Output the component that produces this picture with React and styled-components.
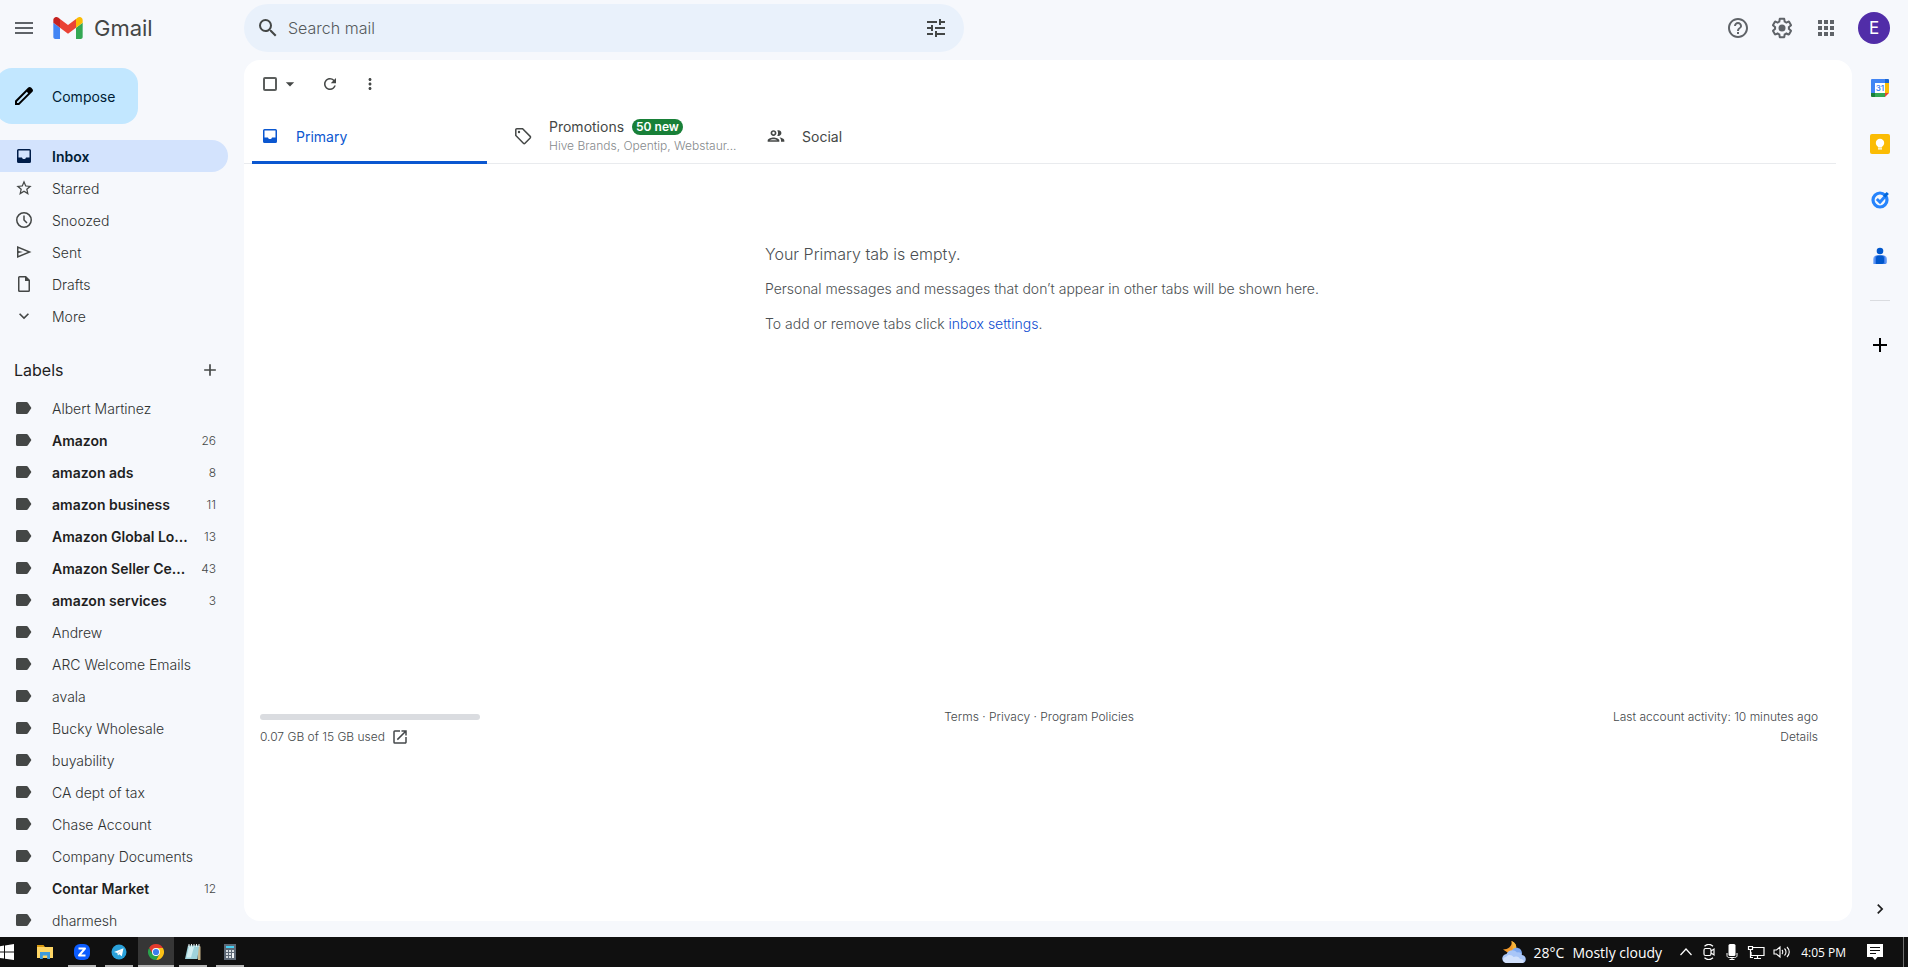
import styled, { createGlobalStyle } from "styled-components";
import {
  MdMenu,
  MdSearch,
  MdTune,
  MdHelpOutline,
  MdApps,
  MdRefresh,
  MdMoreVert,
  MdArrowDropDown,
  MdExpandMore,
  MdAdd,
  MdOpenInNew,
  MdChevronRight,
  MdOutlineGroup,
} from "react-icons/md";

const GlobalStyle = createGlobalStyle`
  * {
    box-sizing: border-box;
  }
  body {
    margin: 0;
    background: #f6f8fc;
    color: #444746;
    font-family: Inter, Roboto, "Liberation Sans", sans-serif;
    font-size: 14px;
  }
  button, input {
    font: inherit;
    color: inherit;
  }
  button {
    padding: 0;
    border: 0;
    background: none;
    cursor: pointer;
  }
  a {
    color: inherit;
    text-decoration: none;
  }
  svg {
    display: block;
    flex: none;
  }
`;

const Page = styled.div`
  display: flex;
  flex-direction: column;
  min-height: 100vh;
`;
const Body = styled.div`
  flex: 1;
  display: flex;
`;
const Header = styled.header`
  display: flex;
  align-items: center;
  height: 56px;
  margin-bottom: 4px;
  padding-right: 18px;
`;
const Brand = styled.div`
  display: flex;
  align-items: center;
  width: 244px;
  padding-left: 12px;
`;
const IconButton = styled.button`
  display: flex;
  align-items: center;
  justify-content: center;
  width: ${({ $width }) => $width || 24}px;
  height: 24px;
  color: ${({ $color }) => $color || "#444746"};
`;
const Logo = styled.a`
  display: flex;
  align-items: center;
  gap: 11px;
  margin-left: 17px;
  color: #444746;
  font-size: 22px;
  line-height: 28px;
`;
const SearchBar = styled.form`
  display: flex;
  align-items: center;
  gap: 8px;
  flex: 0 1 720px;
  height: 48px;
  padding: 0 16px 0 12px;
  border-radius: 24px;
  background: #e9f1fb;
`;
const SearchInput = styled.input`
  flex: 1;
  min-width: 0;
  padding: 0;
  border: 0;
  outline: 0;
  background: transparent;
  font-size: 16px;
  font-weight: 300;
  &::placeholder {
    color: #55595b;
    opacity: 1;
  }
`;
const HeaderTools = styled.div`
  display: flex;
  align-items: center;
  gap: 20px;
  margin-left: auto;
`;
const Avatar = styled.button`
  width: 32px;
  height: 32px;
  border-radius: 50%;
  background: #512da8;
  color: white;
  font-size: 17px;
  line-height: 32px;
`;

const Sidebar = styled.aside`
  width: 244px;
  flex: none;
  padding: 8px 16px 0 0;
`;
const Compose = styled.button`
  display: flex;
  align-items: center;
  gap: 16px;
  width: 142px;
  height: 56px;
  margin: 0 0 16px -4px;
  padding-left: 16px;
  border-radius: 16px;
  background: #c2e7ff;
  color: #001d35;
`;
const NavItem = styled.a`
  display: flex;
  align-items: center;
  height: 32px;
  padding: 0 12px 0 14px;
  border-radius: 0 16px 16px 0;
  background: ${({ $active }) => ($active ? "#d3e3fd" : "transparent")};
  color: ${({ $active, $bold }) => ($active ? "#001d35" : $bold ? "#1f1f1f" : "#2f3231")};
  font-weight: ${({ $active, $bold }) => ($active || $bold ? 600 : 300)};
  svg {
    margin-right: 18px;
    color: ${({ $active }) => ($active ? "#001d49" : "#444746")};
  }
`;
const Count = styled.span`
  margin-left: auto;
  color: #444746;
  font-size: 12px;
  font-weight: 300;
`;
const LabelsHeading = styled.div`
  display: flex;
  align-items: center;
  justify-content: space-between;
  height: 32px;
  margin: 22px 0 6px;
  padding: 0 6px 0 14px;
  h2 {
    margin: 0;
    color: #1f1f1f;
    font-size: 16px;
    font-weight: 400;
  }
`;

const Card = styled.main`
  flex: 1;
  min-width: 0;
  margin-bottom: 16px;
  padding-right: 16px;
  border-radius: 16px;
  background: white;
`;
const Toolbar = styled.div`
  display: flex;
  align-items: center;
  height: 48px;
  padding-left: 19px;
`;
const CheckBox = styled.input`
  appearance: none;
  width: 14px;
  height: 14px;
  margin: 0 1px 0 0;
  border: 2px solid #5b5e5d;
  border-radius: 2px;
`;
const Tabs = styled.div`
  display: flex;
  height: 56px;
  border-bottom: 1px solid #e9ebee;
`;
const Tab = styled.button`
  display: flex;
  align-items: center;
  gap: 16px;
  width: 235px;
  height: 56px;
  margin: 0 10px 0 8px;
  padding-left: 8px;
  border-bottom: 3px solid ${({ $active }) => ($active ? "#0b57d0" : "transparent")};
  border-top: 3px solid transparent;
  border-radius: 2px 2px 0 0;
  color: ${({ $active }) => ($active ? "#0b57d0" : "#444746")};
  text-align: left;
  white-space: nowrap;
`;
const TabTitle = styled.span`
  display: flex;
  align-items: center;
  gap: 8px;
  line-height: 20px;
`;
const Badge = styled.span`
  padding: 0 4px;
  border-radius: 8px;
  background: #188038;
  color: white;
  font-size: 12px;
  font-weight: 600;
  line-height: 16px;
`;
const TabSenders = styled.span`
  display: block;
  color: #85898c;
  font-size: 12px;
  font-weight: 300;
  line-height: 18px;
`;
const Empty = styled.section`
  width: 550px;
  margin: 80px auto 0;
  color: #4b4f52;
  font-weight: 300;
  white-space: nowrap;
  p {
    margin: 0 0 15px;
    line-height: 20px;
  }
  p:first-child {
    font-size: 16px;
  }
  a {
    color: #0b4bd0;
  }
`;
const Footer = styled.footer`
  display: grid;
  grid-template-columns: 1fr auto 1fr;
  margin-top: 373px;
  padding: 0 18px 0 16px;
  color: #44484b;
  font-size: 12px;
  font-weight: 300;
  line-height: 20px;
`;
const StorageBar = styled.div`
  width: 220px;
  height: 6px;
  margin: 7px 0;
  border-radius: 3px;
  background: #dadce0;
`;
const Storage = styled.a`
  display: flex;
  align-items: center;
  gap: 6px;
`;
const Activity = styled.div`
  text-align: right;
  a {
    display: block;
  }
`;

const SidePanel = styled.aside`
  display: flex;
  flex-direction: column;
  align-items: center;
  gap: 32px;
  width: 56px;
  padding: 16px 0;
`;
const Divider = styled.hr`
  width: 20px;
  margin: 0;
  border: 0;
  border-top: 1px solid #dadce0;
`;
const PanelToggle = styled(IconButton)`
  margin-top: auto;
`;

const Taskbar = styled.footer`
  display: flex;
  align-items: center;
  justify-content: space-between;
  height: 30px;
  background: #101010;
  color: white;
  font-family: "Open Sans", "Noto Sans", sans-serif;
`;
const TaskApps = styled.div`
  display: flex;
  gap: 1px;
`;
const TaskButton = styled.button`
  display: flex;
  align-items: center;
  justify-content: center;
  width: 36px;
  height: 30px;
  background: ${({ $active }) => ($active ? "#363636" : "transparent")};
  border-top: 2px solid transparent;
  border-bottom: 2px solid transparent;
  border-image: ${({ $open, $active }) =>
    $active
      ? "linear-gradient(#b5b5b5, #b5b5b5) 0 0 2 0"
      : $open
        ? "linear-gradient(90deg, transparent 4px, #b5b5b5 4px, #b5b5b5 32px, transparent 32px) 0 0 2 0"
        : "none"};
`;
const StartButton = styled(TaskButton)`
  width: 26px;
  justify-content: flex-start;
`;
const Tray = styled.div`
  display: flex;
  align-items: center;
  height: 30px;
  padding-right: 4px;
`;
const Weather = styled.button`
  display: flex;
  align-items: center;
  gap: 8px;
  margin-right: 17px;
  font-size: 14px;
`;
const TrayIcons = styled.div`
  display: flex;
  align-items: center;
  gap: 8px;
`;
const Clock = styled.time`
  margin: 0 21px 0 10px;
  font-size: 12px;
`;
const ShowDesktop = styled.div`
  width: 1px;
  height: 30px;
  margin-left: 20px;
  background: #6e6e6e;
`;

const GmailLogo = () => (
  <svg width="30" height="22" viewBox="52 42 88 66">
    <path fill="#4285f4" d="M58 108h14V74L52 59v43c0 3.32 2.69 6 6 6" />
    <path fill="#34a853" d="M120 108h14c3.32 0 6-2.69 6-6V59l-20 15" />
    <path fill="#fbbc04" d="M120 48v26l20-15v-8c0-7.42-8.47-11.65-14.4-7.2" />
    <path fill="#ea4335" d="M72 74V48l24 18 24-18v26L96 92" />
    <path fill="#c5221f" d="M52 51v8l20 15V48l-5.6-4.2c-5.94-4.45-14.4-.22-14.4 7.2" />
  </svg>
);

const PencilIcon = () => (
  <svg width="24" height="24" viewBox="0 0 24 24" fill="#000">
    <path d="M20.41 4.94l-1.35-1.35c-.78-.78-2.05-.78-2.83 0L3 16.82V21h4.18L20.41 7.77c.79-.78.79-2.05 0-2.83zm-14 14.12L5 19v-1.36l9.82-9.82 1.41 1.41-9.82 9.83z" />
  </svg>
);

const GearIcon = () => (
  <svg width="24" height="24" viewBox="0 0 24 24" fill="currentColor">
    <path d="M13.85 22.25h-3.7c-.74 0-1.36-.54-1.45-1.27l-.27-1.89c-.27-.14-.53-.29-.79-.46l-1.8.72c-.7.26-1.47-.03-1.81-.65L2.2 15.53c-.35-.66-.2-1.44.36-1.88l1.53-1.19c-.01-.15-.02-.3-.02-.46 0-.15.01-.31.02-.46l-1.52-1.19c-.59-.45-.74-1.26-.37-1.88l1.85-3.19c.34-.62 1.11-.9 1.79-.63l1.81.73c.26-.17.52-.32.78-.46l.27-1.91c.09-.7.71-1.25 1.44-1.25h3.7c.74 0 1.36.54 1.45 1.27l.27 1.89c.27.14.53.29.79.46l1.8-.72c.71-.26 1.48.03 1.82.65l1.84 3.18c.36.66.2 1.44-.36 1.88l-1.52 1.19c.01.15.02.3.02.46s-.01.31-.02.46l1.52 1.19c.56.45.72 1.23.37 1.86l-1.86 3.22c-.34.62-1.11.9-1.8.63l-1.8-.72c-.26.17-.52.32-.78.46l-.27 1.91c-.1.68-.72 1.22-1.46 1.22zm-3.23-2h2.76l.37-2.55.53-.22c.44-.18.88-.44 1.34-.78l.45-.34 2.38.96 1.38-2.4-2.03-1.58.07-.56c.03-.26.06-.51.06-.78s-.03-.53-.06-.78l-.07-.56 2.03-1.58-1.39-2.4-2.39.96-.45-.35c-.42-.32-.87-.58-1.33-.77l-.52-.22-.37-2.55h-2.76l-.37 2.55-.53.21c-.44.19-.88.44-1.34.79l-.45.33-2.38-.95-1.39 2.39 2.03 1.58-.07.56a7 7 0 0 0-.06.79c0 .26.02.53.06.78l.07.56-2.03 1.58 1.38 2.4 2.39-.96.45.35c.43.33.86.58 1.33.77l.53.22.38 2.55z" />
    <circle cx="12" cy="12" r="3.5" />
  </svg>
);

const InboxIcon = () => (
  <svg width="20" height="20" viewBox="0 0 20 20" fill="currentColor">
    <path
      fillRule="evenodd"
      d="M4.5 3h11A1.5 1.5 0 0117 4.5v11a1.5 1.5 0 01-1.5 1.5h-11A1.5 1.5 0 013 15.5v-11A1.5 1.5 0 014.5 3zm0 1.500V11.500H8c.3 1 1 1.500 2 1.500s1.700-.5 2-1.500h3.500v-7z"
    />
  </svg>
);

const StarIcon = () => (
  <svg width="20" height="20" viewBox="-1 -1 26 26" fill="currentColor">
    <path d="M22 9.24l-7.19-.62L12 2 9.19 8.63 2 9.24l5.46 4.73L5.82 21 12 17.27 18.18 21l-1.63-7.03L22 9.24zM12 15.4l-3.76 2.27 1-4.28-3.32-2.88 4.38-.38L12 6.1l1.71 4.04 4.38.38-3.32 2.88 1 4.28L12 15.4z" />
  </svg>
);

const ClockIcon = () => (
  <svg width="20" height="20" viewBox="0 0 20 20" fill="none" stroke="currentColor" strokeWidth="1.5">
    <circle cx="10" cy="10" r="7.25" />
    <path d="M10 5.5V10l3 3" />
  </svg>
);

const SendIcon = () => (
  <svg width="20" height="20" viewBox="0 0 20 20" fill="currentColor">
    <path fillRule="evenodd" d="M3 16V4l14.500 6zm1.500-2.200L13.600 10 4.500 6.200v2.700L9 10l-4.500 1.100z" />
  </svg>
);

const DraftIcon = () => (
  <svg width="20" height="20" viewBox="0 0 20 20" fill="currentColor">
    <path
      fillRule="evenodd"
      d="M5.500 2H12l4 4v10.500a1.500 1.500 0 01-1.500 1.500h-9A1.500 1.500 0 014 16.500v-13A1.500 1.500 0 015.500 2zm0 1.500v13h9V7H11V3.500z"
    />
  </svg>
);

const LabelIcon = () => (
  <svg width="20" height="20" viewBox="0 0 20 20" fill="currentColor">
    <path d="M3.5 4h9c.6 0 1 .2 1.4.7L17.4 10l-3.500 5.300c-.4.5-.8.7-1.400.7h-9A1.500 1.500 0 012 14.500v-9A1.500 1.500 0 013.500 4z" />
  </svg>
);

const TagIcon = () => (
  <svg width="20" height="20" viewBox="0 0 20 20" fill="none" stroke="currentColor" strokeWidth="1.5">
    <path d="M2.800 3.800v5.700l7.600 7.800c.5.5 1.100.5 1.600 0l5.200-5.300c.5-.5.5-1.100 0-1.600L9.600 2.800H3.800a1 1 0 00-1 1z" />
    <circle cx="6" cy="6" r="1.2" fill="currentColor" stroke="none" />
  </svg>
);

const CalendarIcon = () => (
  <svg width="20" height="20" viewBox="0 0 20 20">
    <path fill="#4285f4" d="M2 1h13v4H5v11H1V2a1 1 0 011-1z" />
    <path fill="#1967d2" d="M15 1h3a1 1 0 011 1v3h-4z" />
    <path fill="#fbbc04" d="M15 5h4v10h-4z" />
    <path fill="#34a853" d="M5 15h10v4H5z" />
    <path fill="#188038" d="M1 15h4v4H2a1 1 0 01-1-1z" />
    <path fill="#ea4335" d="M15 15h4l-4 4z" />
    <path fill="#fff" d="M5 5h10v10H5z" />
    <text x="10" y="13" textAnchor="middle" fontSize="8" fontWeight="600" fill="#4285f4">
      31
    </text>
  </svg>
);

const KeepIcon = () => (
  <svg width="20" height="20" viewBox="0 0 20 20">
    <rect width="20" height="20" rx="2" fill="#fbbc04" />
    <circle cx="10" cy="9" r="4.2" fill="#fff" />
    <path fill="#fff" d="M8 11h4v2.500H8zm0 3.300h4v1.200H8z" />
  </svg>
);

const TasksIcon = () => (
  <svg width="20" height="20" viewBox="0 0 20 20" fill="none">
    <circle cx="10" cy="10" r="7" stroke="#2684fc" strokeWidth="3.2" />
    <path stroke="#2684fc" strokeWidth="3" d="M6.800 9l3.200 3 5.500-6" />
    <path stroke="#0066da" strokeWidth="3" d="M14.200 6.600l3.600-3.600" />
  </svg>
);

const ContactsIcon = () => (
  <svg width="20" height="20" viewBox="0 0 20 20">
    <circle cx="10" cy="5" r="3.3" fill="#0057cc" />
    <path fill="#7baaf7" d="M7 9.500h6c2.500 0 4 1.500 4 4V16c0 1.500-.8 2-2 2H3.200v-4.500c0-2.500 1.300-4 3.800-4z" />
    <path fill="#3f7eeb" d="M7 9.500h6c1.700 0 2.500 1.500 2.500 4V18h-11v-4.500c0-2.500.8-4 2.500-4z" />
    <path fill="#0057cc" d="M8.500 9.500h3c1.700 0 2.500 1 2.500 3V16c0 1.300-.7 2-2 2H6v-5.500c0-2 .8-3 2.500-3z" />
  </svg>
);

const WindowsIcon = () => (
  <svg width="14" height="16" viewBox="0 0 14 16" fill="#fff">
    <path d="M0 2.200L4 1.600v6H0zM5 1.400L14 0v7.600H5zM0 8.500h4v6l-4-.6zm5 0h9V16l-9-1.300z" />
  </svg>
);

const ExplorerIcon = () => (
  <svg width="16" height="14" viewBox="0 0 16 14">
    <path fill="#d99a10" d="M0 0h6.500l1.500 2H0z" />
    <path fill="#ffd766" d="M0 2h16v11H0z" />
    <path fill="#3f9bdc" d="M3 7h10v7h-2.800v-3.500H5.800V14H3z" />
  </svg>
);

const ZoomIcon = () => (
  <svg width="16" height="16" viewBox="0 0 16 16">
    <rect width="16" height="16" rx="6" fill="#0b5cff" />
    <path d="M4.500 4.500h6.500l-6 7h6.500" fill="none" stroke="#fff" strokeWidth="2" strokeLinejoin="round" />
  </svg>
);

const TelegramIcon = () => (
  <svg width="16" height="16" viewBox="0 0 16 16">
    <circle cx="8" cy="8" r="7.5" fill="#2aa1da" />
    <path d="M3 8l9.500-3.700-1.700 8L8.200 10.300 7 11.600l-.6-2.700z" fill="#fff" />
    <path d="M6.400 8.900l4.200-2.900-3.300 3.600L7 11.600z" fill="#b8d9ea" />
  </svg>
);

const ChromeIcon = () => (
  <svg width="16" height="16" viewBox="0 0 16 16">
    <path d="M8 4h6.930A8 8 0 018 16l3.460-6z" fill="#fbc116" />
    <path d="M1.070 4A8 8 0 0114.930 4H8L4.540 10z" fill="#e33b2e" />
    <path d="M1.070 4L4.540 10h6.920L8 16A8 8 0 011.070 4z" fill="#2aa24c" />
    <circle cx="8" cy="8" r="4" fill="#fff" />
    <circle cx="8" cy="8" r="3.100" fill="#3b7ded" />
  </svg>
);

const NotepadIcon = () => (
  <svg width="16" height="16" viewBox="0 0 16 16">
    <path fill="#c9b68c" d="M13 2l2.500.5V16H13z" />
    <path fill="#9fd3dc" d="M3 1.500h11L12.500 15H0z" />
    <path fill="#d3eff2" d="M4 3h5L6 13.500H1.500z" />
    <path stroke="#e8f1f2" d="M4 0v3M6.500 0v3M9 0v3M11.500 0v3M14 0v3" />
  </svg>
);

const CalculatorIcon = () => (
  <svg width="12" height="16" viewBox="0 0 12 16">
    <rect width="12" height="16" fill="#5d6875" />
    <path fill="#45d0f5" d="M2 2h8v2H2z" />
    <path fill="#d7dce0" d="M2 6h2v2H2zm3 0h2v2H5zm3 0h2v2H8zM2 9h2v2H2zm3 0h2v2H5zM2 12h2v2H2zm3 0h2v2H5z" />
    <path fill="#f0f3f5" d="M8 9h2v5H8z" />
  </svg>
);

const WeatherIcon = () => (
  <svg width="24" height="24" viewBox="0 0 24 24">
    <path fill="#f39a2b" d="M9.500 1c4 1.500 5.500 5 4.500 8.500L8 14 1 9.500c5 0 9.500-3 8.500-8.500z" />
    <path fill="#f4b63c" d="M9.500 1c4 1.500 5.500 5 4.500 8.500L10 11c1-3 .8-6-.5-10z" />
    <path fill="#7fa9f0" d="M9 13c1-7 11-7 11 1z" />
    <path fill="#a9c6f8" d="M5 23a4.500 4.500 0 01-.5-9C6 10 12 8.500 15 12.500c2-1 5 .5 5 2.500 5 .5 5 8 0 8z" />
    <path fill="#d2e1fc" d="M4 23c-4-1-3.500-6 0-6 2-3 6-2.500 7.500 0 3-1.500 6 0 6.500 2 3 0 5 2 3 4z" />
  </svg>
);

const ChevronUpIcon = () => (
  <svg width="14" height="16" viewBox="0 0 14 16" fill="none" stroke="#fff" strokeWidth="1.2">
    <path d="M1.500 11L7 5l5.500 6" />
  </svg>
);

const MeetNowIcon = () => (
  <svg width="16" height="16" viewBox="0 0 16 16" fill="none" stroke="#fff" strokeWidth="1.2">
    <rect x="3" y="4.500" width="7" height="7" rx="1.500" />
    <path d="M10 7l3-2v6l-3-2M3.500 2.200C6 0 9.500 0 12 2.200M3.500 13.800c2.500 2.200 6 2.200 8.500 0" />
  </svg>
);

const MicIcon = () => (
  <svg width="14" height="16" viewBox="0 0 14 16" fill="#fff">
    <rect x="3.500" width="7" height="12" rx="1.500" />
    <path d="M2 9v2.500c0 1.500 1 2 2.500 2h5c1.500 0 2.500-.5 2.500-2V9M7 13.500v2M4.500 15.500h5" fill="none" stroke="#fff" />
  </svg>
);

const NetworkIcon = () => (
  <svg width="18" height="16" viewBox="0 0 18 16" fill="none" stroke="#fff" strokeWidth="1.2">
    <path d="M6 3.500h11v8H4V8M10.500 11.500v3M7 14.500h7" />
    <path d="M1.500 2.500h4v3h-4zM3.500 5.500v8H6" />
  </svg>
);

const SpeakerIcon = () => (
  <svg width="18" height="16" viewBox="0 0 18 16" fill="none" stroke="#fff" strokeWidth="1.1">
    <path d="M1 6h2.500L7 3v10l-3.500-3H1zM9 6c1 1 1 3 0 4M11.500 4.500c2 2 2 5 0 7M14 3c3 3 3 7 0 10" />
  </svg>
);

const NotificationIcon = () => (
  <svg width="16" height="16" viewBox="0 0 16 16">
    <path fill="#fff" d="M0 0h16v13h-5.500L8 16l-2.500-3H0z" />
    <path stroke="#101010" d="M3 3.500h10M3 6.500h10M3 9.500h6" />
  </svg>
);

const folders = [
  { name: "Inbox", icon: <InboxIcon />, active: true },
  { name: "Starred", icon: <StarIcon /> },
  { name: "Snoozed", icon: <ClockIcon /> },
  { name: "Sent", icon: <SendIcon /> },
  { name: "Drafts", icon: <DraftIcon /> },
  { name: "More", icon: <MdExpandMore size={20} /> },
];

const labels = [
  { name: "Albert Martinez" },
  { name: "Amazon", count: 26 },
  { name: "amazon ads", count: 8 },
  { name: "amazon business", count: 11 },
  { name: "Amazon Global Lo...", count: 13 },
  { name: "Amazon Seller Ce...", count: 43 },
  { name: "amazon services", count: 3 },
  { name: "Andrew" },
  { name: "ARC Welcome Emails" },
  { name: "avala" },
  { name: "Bucky Wholesale" },
  { name: "buyability" },
  { name: "CA dept of tax" },
  { name: "Chase Account" },
  { name: "Company Documents" },
  { name: "Contar Market", count: 12 },
  { name: "dharmesh" },
];

export default function App() {
  return (
    <Page>
      <GlobalStyle />
      <Header>
        <Brand>
          <IconButton $color="#5f6368" aria-label="Main menu">
            <MdMenu size={24} />
          </IconButton>
          <Logo href="#">
            <GmailLogo />
            Gmail
          </Logo>
        </Brand>
        <SearchBar>
          <IconButton type="button" aria-label="Search">
            <MdSearch size={24} />
          </IconButton>
          <SearchInput type="text" placeholder="Search mail" aria-label="Search mail" />
          <IconButton type="button" aria-label="Search options">
            <MdTune size={24} />
          </IconButton>
        </SearchBar>
        <HeaderTools>
          <IconButton $color="#5f6368" aria-label="Support">
            <MdHelpOutline size={24} />
          </IconButton>
          <IconButton $color="#5f6368" aria-label="Settings">
            <GearIcon />
          </IconButton>
          <IconButton $color="#5f6368" aria-label="Google apps">
            <MdApps size={24} />
          </IconButton>
          <Avatar aria-label="Account">E</Avatar>
        </HeaderTools>
      </Header>
      <Body>
        <Sidebar>
          <Compose>
            <PencilIcon />
            Compose
          </Compose>
          <nav>
            {folders.map(({ name, icon, active }) => (
              <NavItem key={name} href="#" $active={active}>
                {icon}
                {name}
              </NavItem>
            ))}
          </nav>
          <LabelsHeading>
            <h2>Labels</h2>
            <IconButton aria-label="Create new label">
              <MdAdd size={20} />
            </IconButton>
          </LabelsHeading>
          <nav>
            {labels.map(({ name, count }) => (
              <NavItem key={name} href="#" $bold={count > 0}>
                <LabelIcon />
                {name}
                {count && <Count>{count}</Count>}
              </NavItem>
            ))}
          </nav>
        </Sidebar>
        <Card>
          <Toolbar>
            <CheckBox type="checkbox" aria-label="Select" />
            <IconButton aria-label="Select options">
              <MdArrowDropDown size={20} />
            </IconButton>
            <IconButton $width={56} aria-label="Refresh">
              <MdRefresh size={18} />
            </IconButton>
            <IconButton aria-label="More">
              <MdMoreVert size={18} />
            </IconButton>
          </Toolbar>
          <Tabs>
            <Tab $active>
              <InboxIcon />
              Primary
            </Tab>
            <Tab>
              <TagIcon />
              <span>
                <TabTitle>
                  Promotions
                  <Badge>50 new</Badge>
                </TabTitle>
                <TabSenders>Hive Brands, Opentip, Webstaur...</TabSenders>
              </span>
            </Tab>
            <Tab>
              <MdOutlineGroup size={20} />
              Social
            </Tab>
          </Tabs>
          <Empty>
            <p>Your Primary tab is empty.</p>
            <p>Personal messages and messages that don’t appear in other tabs will be shown here.</p>
            <p>
              To add or remove tabs click <a href="#">inbox settings</a>.
            </p>
          </Empty>
          <Footer>
            <div>
              <StorageBar />
              <Storage href="#">
                0.07 GB of 15 GB used
                <MdOpenInNew size={18} />
              </Storage>
            </div>
            <div>
              <a href="#">Terms</a> · <a href="#">Privacy</a> · <a href="#">Program Policies</a>
            </div>
            <Activity>
              Last account activity: 10 minutes ago
              <a href="#">Details</a>
            </Activity>
          </Footer>
        </Card>
        <SidePanel>
          <IconButton aria-label="Calendar">
            <CalendarIcon />
          </IconButton>
          <IconButton aria-label="Keep">
            <KeepIcon />
          </IconButton>
          <IconButton aria-label="Tasks">
            <TasksIcon />
          </IconButton>
          <IconButton aria-label="Contacts">
            <ContactsIcon />
          </IconButton>
          <Divider />
          <IconButton $color="#000" aria-label="Get add-ons">
            <MdAdd size={24} />
          </IconButton>
          <PanelToggle $color="#1f1f1f" aria-label="Hide side panel">
            <MdChevronRight size={20} />
          </PanelToggle>
        </SidePanel>
      </Body>
      <Taskbar>
        <TaskApps>
          <StartButton aria-label="Start">
            <WindowsIcon />
          </StartButton>
          <TaskButton aria-label="File Explorer">
            <ExplorerIcon />
          </TaskButton>
          <TaskButton $open aria-label="Zoom">
            <ZoomIcon />
          </TaskButton>
          <TaskButton $open aria-label="Telegram">
            <TelegramIcon />
          </TaskButton>
          <TaskButton $active aria-label="Chrome">
            <ChromeIcon />
          </TaskButton>
          <TaskButton $open aria-label="Notepad">
            <NotepadIcon />
          </TaskButton>
          <TaskButton $open aria-label="Calculator">
            <CalculatorIcon />
          </TaskButton>
        </TaskApps>
        <Tray>
          <Weather>
            <WeatherIcon />
            <span>28°C</span>
            <span>Mostly cloudy</span>
          </Weather>
          <TrayIcons>
            <ChevronUpIcon />
            <MeetNowIcon />
            <MicIcon />
            <NetworkIcon />
            <SpeakerIcon />
          </TrayIcons>
          <Clock>4:05 PM</Clock>
          <NotificationIcon />
          <ShowDesktop />
        </Tray>
      </Taskbar>
    </Page>
  );
}
